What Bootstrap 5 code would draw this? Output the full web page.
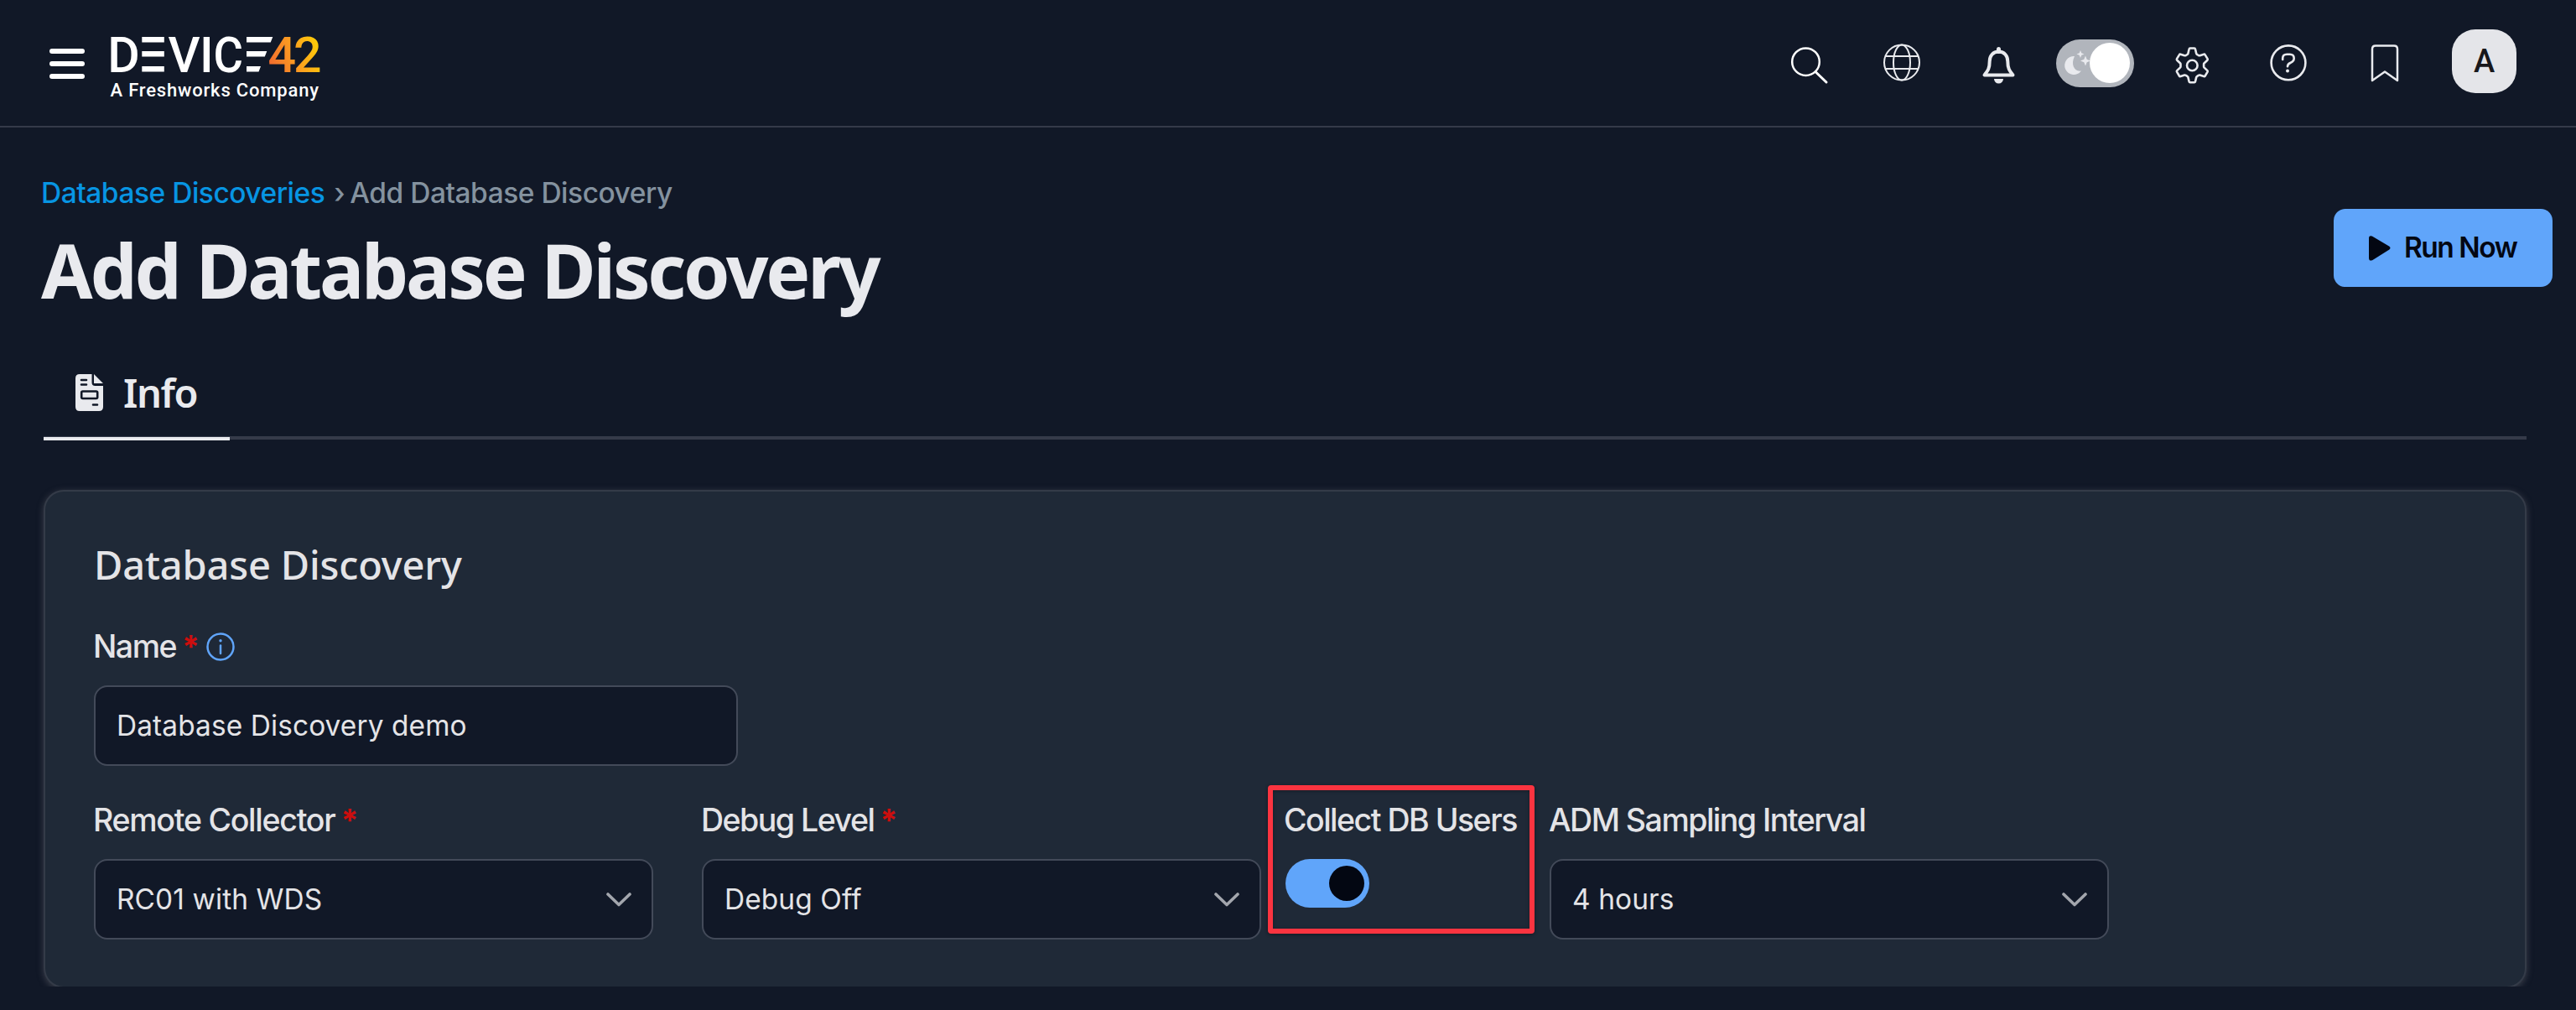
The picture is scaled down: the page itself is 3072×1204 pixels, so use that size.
<!DOCTYPE html>
<html lang="en" data-bs-theme="dark">
<head>
<meta charset="utf-8">
<meta name="viewport" content="width=device-width, initial-scale=1">
<title>Add Database Discovery</title>
<link href="https://cdn.jsdelivr.net/npm/bootstrap@5.3.0/dist/css/bootstrap.min.css" rel="stylesheet">
<style>
  body { background: #111827; font-family: Inter, "Liberation Sans", sans-serif; color: #e4e4e7; overflow: hidden; }
  svg { display: block; flex: none; overflow: visible; }
  .topbar { height: 152px; border-bottom: 2px solid #353a49; padding: 0 71px 0 59px; flex-wrap: nowrap; }
  .brand { margin-left: 25px; }
  .brand text { font-family: Roboto, sans-serif; font-weight: 500; }
  .ico { color: #e9eaee; }
  .g-globe { margin-left: 66px; } .g-bell { margin-left: 74px; } .g-theme { margin-left: 49px; }
  .g-gear { margin-left: 49px; } .g-help { margin-left: 72px; } .g-mark { margin-left: 76px; } .g-user { margin-left: 63px; }
  .avatar { width: 77px; height: 76px; border-radius: 28px; background: #e4e5e9; color: #18181b; font: 500 38px/76px Roboto, sans-serif; text-align: center; margin-bottom: 4px; }
  .page-head { padding: 56px 28px 0 50px; }
  .crumbs { font-size: 33.5px; line-height: 44px; font-weight: 500; letter-spacing: -.48px; margin: 0 0 20px -1px; color: #84929f; }
  .crumbs a { color: #0795e3; text-decoration: none; }
  .crumbs .sep { margin: 0 9px 0 11px; display: inline-block; width: 10px; }
  .page-title { font: 700 89px/100px "Noto Sans", sans-serif; letter-spacing: -3.2px; color: #e9eaee; margin: 0 0 0 -1px; }
  .btn-run { margin-top: 41px; width: 261px; height: 93px; border-radius: 14px; background: #60a5fa; color: #030712; border: 0; font-weight: 600; font-size: 33.5px; letter-spacing: -1.5px; padding: 0 0 0 42px; }
  .tabs { margin: 48px 59px 0 52px; border-bottom: 4px solid #353a49; height: 104px; }
  .tabs .nav-link { width: 222px; height: 105px; border-radius: 0; border: 0; border-bottom: 4px solid #e9eaee; padding: 0 0 5px 38px; color: #e9eaee !important; font: 600 47px/60px "Noto Sans", sans-serif; letter-spacing: -1.4px; }
  .tab-text { margin-left: 24px; }
  .panel { margin: 62px 61px 0 54px; height: 590px; border-radius: 22px; border: 0; background: #1f2937; padding: 57px 58px 0; box-shadow: 0 0 0 2px #343b48, 0 2px 7px 3px rgba(85,88,98,.5); }
  .panel-title { font: 500 47px/60px "Noto Sans", sans-serif; letter-spacing: -.15px; color: #e4e4e7; margin: 0 0 43px 0; }
  .form-label { font-size: 37.5px; line-height: 50px; font-weight: 500; letter-spacing: -1.5px; margin: 0 0 21px -1px; color: #e4e4e7; white-space: nowrap; display: flex; }
  .label-wide { letter-spacing: -1.25px; }
  .req { color: #cc0e0e; margin-left: 7px; width: 21px; font-weight: 700; letter-spacing: 0; }
  .panel .form-control, .panel .form-select { height: 96px; border: 2px solid #434a59; border-radius: 16px; background-color: #111827; color: #e4e4e7; font-size: 33.4px; letter-spacing: .12px; padding: 0 25px; line-height: 92px; }
  .panel .form-select { width: 667px; padding-right: 80px; background-image: url("data:image/svg+xml,%3csvg xmlns='http://www.w3.org/2000/svg' viewBox='0 0 30 17'%3e%3cpath fill='none' stroke='%23a3a6ad' stroke-width='3.6' stroke-linecap='round' stroke-linejoin='round' d='M2 2l13 12.5L28 2'/%3e%3c/svg%3e"); background-size: 30px 17px; background-position: right 24px center; }
  .name-field { width: 768px; margin-bottom: 40px; }
  .f-debug { margin-left: 58px; } .f-users { margin-left: 29px; width: 315px; position: relative; }
  .f-users::after { content: ""; position: absolute; left: -21px; top: -17px; width: 318px; height: 177px; border: 6px solid #fb3440; border-radius: 4px; box-shadow: 0 1px 4px rgba(0,0,0,.4), inset 0 1px 4px rgba(0,0,0,.3); }
  .f-users .form-label { margin-left: -2px; }
  .f-users .form-check-input { float: none; display: block; margin: 0; width: 100px; height: 58px; border: 0; border-radius: 29px; background-color: #60a5fa; background-image: url("data:image/svg+xml,%3csvg xmlns='http://www.w3.org/2000/svg' viewBox='0 0 100 58'%3e%3ccircle cx='73' cy='29' r='21' fill='%23030712'/%3e%3c/svg%3e") !important; background-size: 100px 58px; background-position: 0 0; }
</style>
<script src="https://cdn.jsdelivr.net/npm/bootstrap@5.3.0/dist/js/bootstrap.bundle.min.js" defer></script>
</head>
<body>
<header class="topbar d-flex align-items-center">
  <svg width="43" height="60" viewBox="0 0 43 60" fill="#fff"><rect y="13" width="42" height="6" rx="3"/><rect y="28" width="42" height="6" rx="3"/><rect y="43" width="42" height="6" rx="3"/></svg>
  <svg class="brand" width="260" height="90" viewBox="127 30 260 90" fill="#fff">
    <defs><linearGradient id="amber" gradientUnits="userSpaceOnUse" x1="321" y1="80" x2="381" y2="60"><stop offset="0" stop-color="#f26a2e"/><stop offset=".5" stop-color="#fb9a22"/><stop offset="1" stop-color="#fecb08"/></linearGradient></defs>
    <g font-size="59">
      <text x="128.200" y="86">D</text>
      <text x="200.500" y="86">V</text>
      <text x="238" y="86">I</text>
      <text x="254.500" y="86" textLength="35.500" lengthAdjust="spacingAndGlyphs">C</text>
      <g fill="url(#amber)"><text x="319.500" y="86">4</text><text x="350" y="86">2</text></g>
    </g>
    <path d="M169.300 44h26.500v6.500h-26.500zM169.300 61h26.500v6.500h-26.500zM169.300 79h26.500v6.500h-26.500z"/>
    <path d="M294 44h31.300l-2.600 6.500H294zM294 61h24.300l-2.500 6.500H294zM294 79h17l-2.500 6.500H294z"/>
    <text x="131.500" y="115" font-size="22" textLength="248.500">A Freshworks Company</text>
  </svg>

  <nav class="d-flex align-items-center ms-auto ico">
    <svg width="44" height="60" viewBox="0 0 44 60" fill="none" stroke="#fff" stroke-linecap="round"><circle cx="17.500" cy="28.700" r="16.300" stroke-width="2.500"/><path d="M29.500 41L42 53" stroke-width="3"/></svg>
    <svg class="g-globe" width="44" height="60" viewBox="0 0 44 60" fill="none" stroke="currentColor" stroke-width="2"><circle cx="22" cy="29.500" r="21"/><ellipse cx="22" cy="29.500" rx="10" ry="21"/><path d="M2.500 22h39M2.500 37h39"/></svg>
    <svg class="g-bell" width="39" height="60" viewBox="0 0 39 60" fill="none" stroke="currentColor" stroke-width="4" stroke-linejoin="round"><path d="M19.500 16.500C12.500 16.500 8.700 22 8.700 28 8.700 37 6.500 39.500 2.500 44.500H36.500C32.500 39.500 30.300 37 30.300 28 30.300 22 26.500 16.500 19.500 16.500Z"/><path d="M19.500 13.500v3" stroke-width="5" stroke-linecap="round"/><path d="M14 49h11a5.500 5.500 0 0 1-11 0z" fill="currentColor" stroke="none"/></svg>
    <svg class="g-theme" width="93" height="60" viewBox="0 0 93 60"><rect y="2" width="93" height="57" rx="28.500" fill="#b1b5bc"/><path fill="#e9eaee" d="M22 22A11 11 0 1 0 30 39.500C22 41 17 32 22 22ZM29 15l1.300 3.200 3.200 1.300-3.200 1.300L29 24l-1.300-3.200-3.200-1.300 3.200-1.300ZM35 21.500l1.700 4.300 4.300 1.700-4.300 1.700L35 33.500l-1.700-4.300-4.300-1.700 4.300-1.700Z"/><circle cx="64" cy="30" r="24" fill="#fff"/></svg>
    <svg class="g-gear" width="41" height="60" viewBox="0 0 41 60" fill="none" stroke="currentColor" stroke-width="2.600" stroke-linejoin="round"><circle cx="20.300" cy="33" r="6.300"/><path d="M17.800 12.500h5q1 0 1.200 1l1.200 5.200q.2.900 1 1.300l1.600 1q.8.400 1.600.2l4.800-1.500q1-.3 1.500.6l2.900 4.800q.5.900-.2 1.600l-3.700 3.500q-.6.600-.6 1.400v2.600q0 .8.600 1.400l3.700 3.500q.7.700.2 1.600l-2.900 4.800q-.5.900-1.500.6l-4.800-1.500q-.8-.2-1.600.2l-1.600 1q-.8.400-1 1.300l-1.200 5.200q-.2 1-1.200 1h-5q-1 0-1.200-1l-1.200-5.200q-.2-.9-1-1.300l-1.600-1q-.8-.4-1.600-.2l-4.800 1.500q-1 .3-1.500-.6l-2.900-4.800q-.5-.9.200-1.600l3.700-3.500q.6-.6.600-1.400v-2.600q0-.8-.6-1.400l-3.700-3.500q-.7-.7-.2-1.600l2.900-4.800q.5-.9 1.500-.6l4.800 1.500q.8.200 1.600-.2l1.600-1q.8-.4 1-1.300l1.200-5.200q.2-1 1.200-1z"/></svg>
    <svg class="g-help" width="44" height="60" viewBox="0 0 44 60" fill="none" stroke="currentColor" stroke-width="2.600" stroke-linecap="round"><circle cx="22" cy="29.800" r="20.400"/><path d="M15.200 26v-1.500q0-4.700 5-4.700h3.500q5 0 5 4.700 0 3.500-4 5.200-3.700 1.500-3.700 4.500"/><circle cx="21" cy="39.400" r="2" fill="currentColor" stroke="none"/></svg>
    <svg class="g-mark" width="34" height="60" viewBox="0 0 34 60" fill="none" stroke="currentColor" stroke-width="2.500" stroke-linejoin="round"><path d="M2 51V13.500q0-4 4-4h22q4 0 4 4V51L17 40.500Z"/></svg>
    <div class="avatar g-user">A</div>
  </nav>
</header>

<main>
  <div class="page-head d-flex justify-content-between align-items-start">
    <div>
      <div class="crumbs"><a href="#">Database Discoveries</a><span class="sep">›</span><span>Add Database Discovery</span></div>
      <h1 class="page-title">Add Database Discovery</h1>
    </div>
    <button class="btn btn-run d-flex align-items-center" type="button">
      <svg width="26" height="30" viewBox="0 0 26 30" fill="#030712"><path d="M0 3Q0-.8 3.800.6L24 12.500Q27 14.500 24 16.800L4.500 29Q0 31 0 26.500Z"/></svg>
      <span class="ms-3">Run Now</span>
    </button>
  </div>

  <ul class="nav tabs">
    <li class="nav-item"><a class="nav-link d-flex align-items-center" href="#">
      <svg width="33" height="44" viewBox="0 0 33 44" fill="#e9eaee"><path d="M5 0H19.500V10Q19.500 14 23.500 14H33V39Q33 44 28 44H5Q0 44 0 39V5Q0 0 5 0ZM22 0L33 11H22Z"/><g fill="none" stroke="#111827" stroke-width="2.600" stroke-linecap="round"><path d="M7 7h6M7 12.500h6M21 36.500h5"/><rect x="7.200" y="20.500" width="19" height="8.500" rx="1.500"/></g></svg>
      <span class="tab-text">Info</span></a></li>
  </ul>

  <section class="card panel">
    <h2 class="panel-title">Database Discovery</h2>
    <div class="name-field">
      <label class="form-label" for="name">Name<span class="req">*</span>
        <svg class="ms-2 mt-2" width="34" height="34" viewBox="0 0 34 34" fill="none" stroke="#60a5fa" stroke-width="2.500" stroke-linecap="round"><circle cx="17" cy="17" r="15.500"/><path d="M17 15.500v9.500"/><circle cx="17" cy="9.800" r="1.700" fill="#60a5fa" stroke="none"/></svg></label>
      <input id="name" class="form-control" type="text" value="Database Discovery demo">
    </div>
    <div class="d-flex align-items-start">
      <div><label class="form-label label-wide" for="rc">Remote Collector<span class="req">*</span></label>
        <select id="rc" class="form-select"><option>RC01 with WDS</option></select></div>
      <div class="f-debug"><label class="form-label" for="dbg">Debug Level<span class="req">*</span></label>
        <select id="dbg" class="form-select"><option>Debug Off</option></select></div>
      <div class="f-users form-switch p-0"><label class="form-label" for="users">Collect DB Users</label>
        <input id="users" class="form-check-input" type="checkbox" role="switch" checked></div>
      <div><label class="form-label" for="adm">ADM Sampling Interval</label>
        <select id="adm" class="form-select"><option>4 hours</option></select></div>
    </div>
  </section>
</main>
</body>
</html>
